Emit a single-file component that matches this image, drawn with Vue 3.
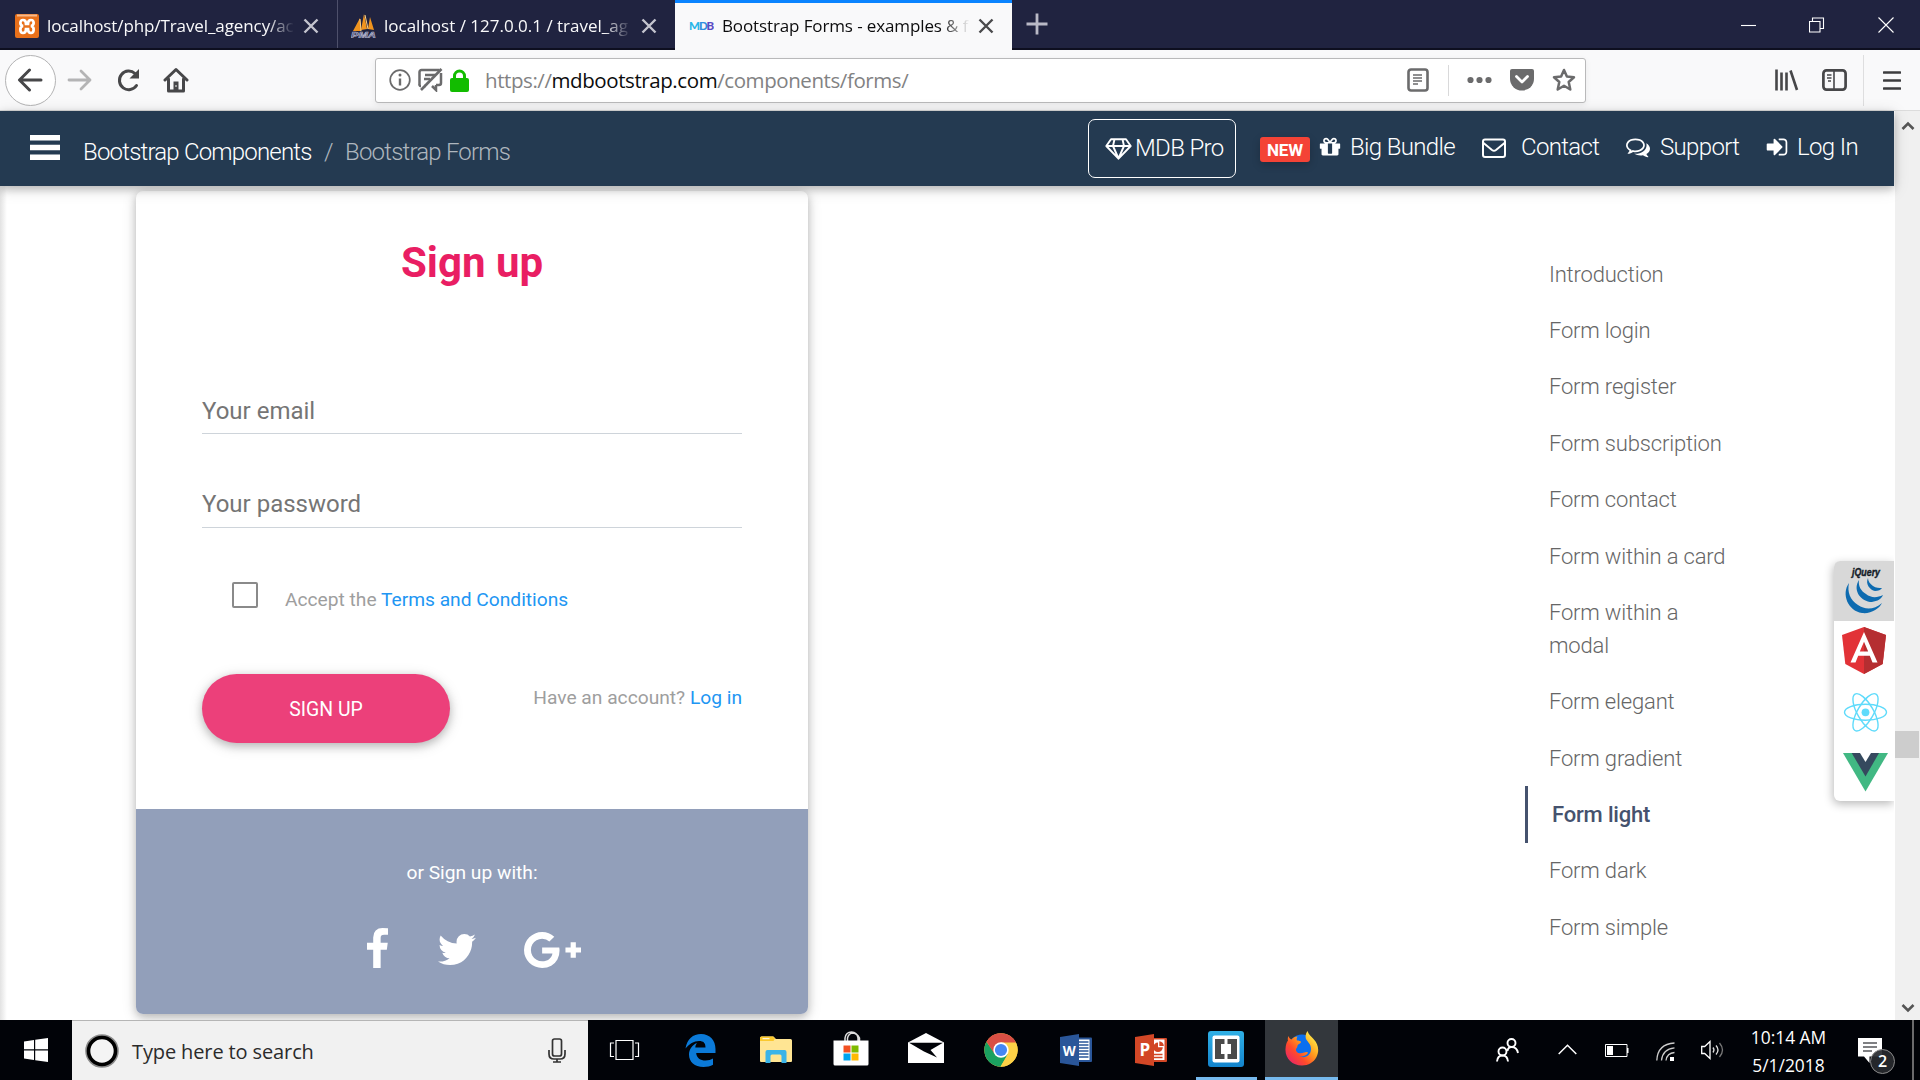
<script setup>
const sections = [
  'Introduction', 'Form login', 'Form register', 'Form subscription', 'Form contact',
  'Form within a card', 'Form within a modal', 'Form elegant', 'Form gradient',
  'Form light', 'Form dark', 'Form simple',
]
const active = 'Form light'
</script>

<template>
  <div class="screen">
    <header class="tabs">
      <div class="tab">
        <svg class="fav" width="24" height="24" viewBox="0 0 24 24">
          <rect width="24" height="24" rx="2" fill="#e8701a" />
          <path d="M2 1.5h20" stroke="#f7b98a" stroke-width="2" />
          <path d="M8 6c-3 0-4 5 0 6-4 1-3 7 0 7 3 0 3-3 3-4h2c0 1 0 4 3 4s4-6 0-7c4-1 3-6 0-6s-3 3-3 4h-2c0-1 0-4-3-4z" fill="none" stroke="#fff" stroke-width="2.7" />
        </svg>
        <span class="label t1">localhost/php/Travel_agency/ac</span>
        <svg class="x" width="16" height="16" viewBox="0 0 16 16"><path d="M1.5 1.5l13 13M14.500 1.500l-13 13" /></svg>
      </div>
      <div class="tab second">
        <svg class="fav" width="26" height="24" viewBox="0 0 26 24">
          <path d="M2 17L9 4l1 13zM10 16L13 0l3 15zM17 15l2-12 4 13z" fill="#f0941e" />
          <path d="M10 17L9 5M17 15L14 1" stroke="#ffd58c" />
          <text x="0" y="23.500" textLength="25" lengthAdjust="spacingAndGlyphs" font-family="Liberation Sans" font-size="9.500" font-weight="700" font-style="italic" fill="#3b3f6b" stroke="#b9bad0" stroke-width=".6">PMA</text>
        </svg>
        <span class="label t2">localhost / 127.0.0.1 / travel_ag</span>
        <svg class="x" width="16" height="16" viewBox="0 0 16 16"><path d="M1.500 1.500l13 13M14.500 1.500l-13 13" /></svg>
      </div>
      <div class="tab current">
        <svg class="fav" width="25" height="24" viewBox="0 0 25 24" font-family="Lato" font-weight="900" font-size="11.500">
          <text x="0" y="16" fill="#28b6e8">M</text><text x="10" y="16" fill="#2f8fe0">D</text><text x="17.500" y="16" fill="#5b4bc4">B</text>
        </svg>
        <span class="label t3">Bootstrap Forms - examples &amp; f</span>
        <svg class="x" width="16" height="16" viewBox="0 0 16 16"><path d="M1.500 1.500l13 13M14.500 1.500l-13 13" /></svg>
      </div>
      <svg class="plus" width="22" height="22" viewBox="0 0 22 22"><path d="M11 0.500v21M.5 11h21" stroke="#b9b9c6" stroke-width="2.800" /></svg>
      <div class="winbtns">
        <svg width="16" height="16" viewBox="0 0 16 16"><path d="M1 8.500h15" /></svg>
        <svg width="16" height="16" viewBox="0 0 16 16"><path d="M.5 4.500h10.500v10.500H.5zM3.500 4.500V1h11v10.500h-3.500" /></svg>
        <svg width="16" height="16" viewBox="0 0 16 16"><path d="M.5.5l15 15M15.500.5l-15 15" /></svg>
      </div>
    </header>

    <div class="toolbar">
      <div class="back">
        <svg width="26" height="24" viewBox="0 0 26 24"><path d="M24 12H3M12.500 2L2.500 12l10 10" fill="none" stroke="#474749" stroke-width="3" stroke-linecap="round" stroke-linejoin="round" /></svg>
      </div>
      <svg class="fwd" width="26" height="24" viewBox="0 0 26 24"><path d="M2 12h21M14 3l9 9-9 9" fill="none" stroke="#b4b4b5" stroke-width="2.800" stroke-linecap="round" stroke-linejoin="round" /></svg>
      <svg class="reload" width="25" height="24" viewBox="0 0 25 24"><path d="M20.500 17.500A9.300 9.300 0 1 1 19 5.500" fill="none" stroke="#474749" stroke-width="3" stroke-linecap="round" /><path d="M23 1v9.500h-9.500z" fill="#474749" /></svg>
      <svg class="home" width="26" height="26" viewBox="0 0 26 26"><path d="M2 13L13 2.500 24 13M5.500 12v12h15V12" fill="none" stroke="#474749" stroke-width="3" stroke-linecap="round" stroke-linejoin="round" /><path d="M10.500 23v-8.500h5V23z" fill="#474749" /><path d="M13 18v2" stroke="#bbb" stroke-width="1.500" /></svg>
      <div class="urlbar">
        <svg class="u1" width="22" height="22" viewBox="0 0 22 22"><circle cx="11" cy="11" r="9.800" fill="none" stroke="#6b6b6c" stroke-width="1.700" /><path d="M11 9.500v7" stroke="#6b6b6c" stroke-width="2.400" /><circle cx="11" cy="6" r="1.500" fill="#6b6b6c" /></svg>
        <svg class="u2" width="25" height="24" viewBox="0 0 25 24"><path d="M3 18H2.500A1.500 1.500 0 0 1 1.500 16V4A2 2 0 0 1 3.500 2h18M8 18h-2M18 17h3a2 2 0 0 0 2-2V5M7 7h10M6 11h6M18 17v5l-4-4" fill="none" stroke="#6b6b6c" stroke-width="2.500" /><path d="M23.500 1L3 22" stroke="#6b6b6c" stroke-width="2.600" /></svg>
        <svg class="u3" width="19" height="23" viewBox="0 0 19 23"><rect y="9" width="19" height="14" rx="2" fill="#12bc00" /><path d="M4.500 11V7a5 5 0 0 1 10 0v4" fill="none" stroke="#12bc00" stroke-width="3" /></svg>
        <span class="url">https://<b>mdbootstrap.com</b>/components/forms/</span>
        <svg class="u4" width="22" height="24" viewBox="0 0 22 24"><rect x="1.500" y="1.500" width="19" height="21" rx="2.500" fill="none" stroke="#6b6b6c" stroke-width="2.600" /><path d="M6 7h9M6 10h9M6 13h9M6 16h5" stroke="#6b6b6c" stroke-width="1.400" /></svg>
        <i class="usep"></i>
        <svg class="u5" width="25" height="8" viewBox="0 0 25 8"><g fill="#6b6b6c"><circle cx="3.500" cy="4" r="3.100" /><circle cx="12.500" cy="4" r="3.100" /><circle cx="21.500" cy="4" r="3.100" /></g></svg>
        <svg class="u6" width="24" height="22" viewBox="0 0 24 22"><path d="M2 0h20a2 2 0 0 1 2 2v8a12 11.500 0 0 1-24 0V2a2 2 0 0 1 2-2z" fill="#6b6b6c" /><path d="M6.500 7.500L12 13l5.500-5.500" fill="none" stroke="#fff" stroke-width="2.800" stroke-linecap="round" stroke-linejoin="round" /></svg>
        <svg class="u7" width="24" height="24" viewBox="0 0 24 24"><path d="M12 2l2.900 6.500 7.100.7-5.300 4.800 1.600 7.500L12 17.700 5.700 21.500l1.600-7.500L2 9.200l7.100-.7z" fill="none" stroke="#6b6b6c" stroke-width="2.500" stroke-linejoin="round" /></svg>
      </div>
      <svg class="lib" width="24" height="22" viewBox="0 0 24 22"><path d="M1.500 0.500v21M6.500 3.500v18M11.500 3.500v18M15.500 1.500l6.500 19.500" stroke="#474749" stroke-width="2.600" /></svg>
      <svg class="side" width="25" height="22" viewBox="0 0 25 22"><rect x="1.400" y="1.400" width="22.200" height="19.200" rx="3" fill="none" stroke="#474749" stroke-width="2.700" /><path d="M12 2v18" stroke="#474749" stroke-width="1.600" /><path d="M5 6h4.500M5 9h4.500M6 12h3" stroke="#474749" stroke-width="1.500" /></svg>
      <i class="tsep"></i>
      <svg class="menu" width="18" height="19" viewBox="0 0 18 19"><path d="M1 1.500h16M1 9.500h16M1 17.500h16" stroke="#3c3c3e" stroke-width="2.600" stroke-linecap="round" /></svg>
    </div>

    <div class="viewport">
      <div class="page">
        <nav class="nav">
          <svg class="burger" width="30" height="25" viewBox="0 0 30 25"><path d="M0 0h30v5.500H0zM0 9.700h30v5.500H0zM0 19.500h30v5.500H0z" fill="#fff" /></svg>
          <span class="crumb c1">Bootstrap Components</span>
          <span class="crumb c2">/</span>
          <span class="crumb c3">Bootstrap Forms</span>
          <a class="pro">
            <svg width="27" height="22" viewBox="0 0 27 22"><path d="M6 1.200h15L25.700 8 13.500 20.700 1.300 8zM1.300 8h24.400M9.500 1.200L8 8l5.500 12.500L19 8l-1.500-6.800" fill="none" stroke="#fff" stroke-width="1.900" stroke-linejoin="round" /></svg>
            <span>MDB Pro</span>
          </a>
          <span class="new">NEW</span>
          <a class="link l1">
            <svg width="22" height="22" viewBox="64 128 1664 1536"><path fill="#fff" d="M1056 1356v-716h-320v716q0 25 18 38.500t46 13.500h192q28 0 46-13.500t18-38.500zm-456-844h195l-126-161q-26-31-69-31-40 0-68 28t-28 68 28 68 68 28zm688-96q0-40-28-68t-68-28q-43 0-69 31l-125 161h194q40 0 68-28t28-68zm376 256v320q0 14-9 23t-23 9h-96v416q0 40-28 68t-68 28h-1088q-40 0-68-28t-28-68v-416h-96q-14 0-23-9t-9-23v-320q0-14 9-23t23-9h440q-93 0-158.500-65.500t-65.500-158.500 65.500-158.500 158.500-65.500q107 0 168 77l128 165 128-165q61-77 168-77 93 0 158.500 65.500t65.500 158.500-65.500 158.500-158.500 65.500h440q14 0 23 9t9 23z" /></svg>
            <span>Big Bundle</span>
          </a>
          <a class="link l2">
            <svg width="24" height="21" viewBox="0 0 24 21"><rect x="1" y="1.500" width="22" height="17.500" rx="2" fill="none" stroke="#fff" stroke-width="2" /><path d="M1.500 5l8.500 7q2 1.500 4 0l8.500-7" fill="none" stroke="#fff" stroke-width="2" /></svg>
            <span>Contact</span>
          </a>
          <a class="link l3">
            <svg width="24" height="24" viewBox="0 0 1792 1792"><path fill="#fff" d="M704 384q-153 0-286 52t-211.500 141-78.500 191q0 82 53 158t149 132l97 56-35 84q34-20 62-39l44-31 53 10q78 14 153 14 153 0 286-52t211.500-141 78.500-191-78.500-191-211.500-141-286-52zm0-128q191 0 353.500 68.500t256.500 186.500 94 257-94 257-256.500 186.500-353.500 68.500q-86 0-176-16-124 88-278 128-36 9-86 16h-3q-11 0-20.500-8t-11.500-21q-1-3-1-6.500t.5-6.500 2-6l2.500-5 3.500-5.500 4-5 4.500-5 4-4.500q5-6 23-25t26-29.500 22.500-29 25-38.500 20.500-44q-124-72-195-177t-71-224q0-139 94-257t256.500-186.500 353.500-68.500zm822 1169q10 24 20.500 44t25 38.500 22.500 29 26 29.500 23 25q1 1 4 4.500t4.500 5 4 5 3.500 5.500l2.500 5 2 6 .5 6.500-1 6.500q-3 14-13 22t-22 7q-50-7-86-16-154-40-278-128-90 16-176 16-271 0-472-132 58 4 88 4 161 0 309-45t264-129q125-92 192-212t67-254q0-77-23-152 129 71 204 178t75 230q0 120-71 224.500t-195 176.500z" /></svg>
            <span>Support</span>
          </a>
          <a class="link l4">
            <svg width="24" height="24" viewBox="0 0 1792 1792"><path fill="#fff" d="M1312 896q0 26-19 45l-544 544q-19 19-45 19t-45-19-19-45v-288h-448q-26 0-45-19t-19-45v-384q0-26 19-45t45-19h448v-288q0-26 19-45t45-19 45 19l544 544q19 19 19 45zm352-352v704q0 119-84.500 203.500t-203.500 84.500h-320q-13 0-22.500-9.500t-9.500-22.500q0-4-1-20t-.5-26.500 3-23.500 10-19.500 20.500-6.500h320q66 0 113-47t47-113v-704q0-66-47-113t-113-47h-312l-11.500-1-11.500-3-8-5.500-7-9-2-13.500q0-4-1-20t-.5-26.500 3-23.500 10-19.500 20.500-6.500h320q119 0 203.500 84.500t84.500 203.500z" /></svg>
            <span>Log In</span>
          </a>
        </nav>

        <main class="content">
          <section class="card">
            <div class="card-body">
              <h3>Sign up</h3>
              <div class="field first">Your email</div>
              <div class="field">Your password</div>
              <div class="accept">
                <i class="box"></i>
                <span>Accept the <a>Terms and Conditions</a></span>
              </div>
              <div class="actions">
                <button>SIGN UP</button>
                <span>Have an account? <a>Log in</a></span>
              </div>
            </div>
            <div class="card-footer">
              <p>or Sign up with:</p>
              <div class="social">
                <svg class="fb" width="21" height="40" viewBox="479 0 864 1664" preserveAspectRatio="none"><path fill="#fff" d="M1343 12v264h-157q-86 0-116 36t-30 108v189h293l-39 296h-254v759h-306v-759h-255v-296h255v-218q0-186 104-288.500t277-102.500q147 0 228 12z" /></svg>
                <svg class="tw" width="38" height="31" viewBox="108 256 1576 1280" preserveAspectRatio="none"><path fill="#fff" d="M1684 408q-67 98-162 167 1 14 1 42 0 130-38 259.500t-115.500 248.500-184.500 210.500-258 146-323 54.500q-271 0-496-145 35 4 78 4 225 0 401-138-105-2-188-64.500t-114-159.500q33 5 61 5 43 0 85-11-112-23-185.500-111.500t-73.500-205.500v-4q68 38 146 41-66-44-105-115t-39-154q0-88 44-163 121 149 294.500 238.500t371.500 99.500q-8-38-8-74 0-134 94.500-228.500t228.500-94.500q140 0 236 102 109-21 205-78-37 115-142 178 93-10 186-50z" /></svg>
                <svg class="gp" width="57" height="36" viewBox="0 163 2304 1466" preserveAspectRatio="none"><path fill="#fff" d="M1437 913q0 208-87 370.500t-248 254-369 91.500q-149 0-285-58t-234-156-156-234-58-285 58-285 156-234 234-156 285-58q286 0 491 192l-199 191q-117-113-292-113-123 0-227.500 62t-165.500 168.500-61 232.500 61 232.500 165.500 168.500 227.500 62q83 0 152.500-23t114.500-57.500 78.500-78.500 49-83 21.500-74h-416v-252h692q12 63 12 122zm867-122v210h-209v209h-210v-209h-209v-210h209v-209h210v209h209z" /></svg>
              </div>
            </div>
          </section>

          <ul class="toc">
            <li v-for="s in sections" :key="s" :class="{ on: s === active }">{{ s }}</li>
          </ul>
        </main>

        <aside class="tech">
          <div class="on">
            <svg width="60" height="60" viewBox="0 0 60 60">
              <text x="18" y="15" textLength="28" lengthAdjust="spacingAndGlyphs" font-family="Liberation Sans" font-style="italic" font-weight="700" font-size="10" fill="#131b28" stroke="#131b28" stroke-width=".4">jQuery</text>
              <g fill="#0d6bb0">
                <path d="M15 22C7 33 14 50 28 52c9 1 17-4 20-10-8 7-17 7-24 2-8-5-11-13-9-22z" />
                <path d="M25 19c-6 9 0 20 11 22 5 0 11-2 13-7-6 3-12 3-17-1-5-3-8-8-7-14z" />
                <path d="M34 17c-3 6 2 12 7 13 3 0 6-1 7-3-3 0-6 0-9-2-3-2-5-5-5-8z" />
              </g>
            </svg>
          </div>
          <div>
            <svg width="60" height="60" viewBox="0 0 60 60">
              <path d="M30 6L8 14l3.300 29L30 53l18.700-10L52 14z" fill="#e23237" /><path d="M30 6v47l18.700-10L52 14z" fill="#b52e31" />
              <path d="M30 11L16.500 41.500h5l2.700-6.800h11.600l2.700 6.800h5zm0 9.800l4.200 9.700h-8.400z" fill="#fff" />
            </svg>
          </div>
          <div>
            <svg width="60" height="60" viewBox="0 0 60 60" fill="none" stroke="#5fdbfb" stroke-width="1.400">
              <ellipse cx="31.500" cy="31.300" rx="21" ry="8" /><ellipse cx="31.500" cy="31.300" rx="21" ry="8" transform="rotate(60 31.500 31.300)" /><ellipse cx="31.500" cy="31.300" rx="21" ry="8" transform="rotate(120 31.500 31.300)" />
              <circle cx="31.500" cy="31.300" r="3.900" fill="#5fdbfb" stroke="none" />
            </svg>
          </div>
          <div>
            <svg width="60" height="60" viewBox="0 0 60 60"><path d="M9 12h45L31.500 50.500z" fill="#41b883" /><path d="M17.700 12H45L31.500 35.500z" fill="#35495e" /><path d="M26 12h11l-5.500 9z" fill="#fff" /></svg>
          </div>
        </aside>
      </div>

      <div class="scroll">
        <svg width="14" height="10" viewBox="0 0 14 10"><path d="M1.500 8L7 2.500 12.500 8" fill="none" stroke="#555" stroke-width="2.600" /></svg>
        <i class="thumb"></i>
        <svg width="14" height="10" viewBox="0 0 14 10"><path d="M1.500 2L7 7.500 12.500 2" fill="none" stroke="#555" stroke-width="2.600" /></svg>
      </div>
    </div>

    <footer class="taskbar">
      <div class="start"><svg width="24" height="24" viewBox="0 0 24 24"><path d="M0 3.400L10 2v9.300H0zM11.200 1.800L24 0v11.300H11.200zM0 12.500h10V22L0 20.600zM11.200 12.500H24V24l-12.800-1.800z" fill="#fff" /></svg></div>
      <div class="search">
        <svg class="cortana" width="34" height="34" viewBox="0 0 34 34"><circle cx="17" cy="17" r="14.800" fill="none" stroke="#8a8a8a" stroke-width="4" /><circle cx="17" cy="17" r="13.500" fill="#f4f4f4" stroke="#000" stroke-width="3.600" /></svg>
        <span>Type here to search</span>
        <svg class="mic" width="18" height="25" viewBox="0 0 18 25"><rect x="4.500" y="1" width="9" height="17" rx="2" fill="none" stroke="#333" stroke-width="1.700" /><path d="M1 12v4q0 5 5 5h6q5 0 5-5v-4M9 21v3M5 24h8" fill="none" stroke="#333" stroke-width="1.700" /></svg>
      </div>
      <div class="apps">
        <div><svg class="tv" width="32" height="22" viewBox="0 0 32 22"><path d="M7 1.500h17v19H7zM5 4H1.500v13.500H5M26 4h3.500v13.500H26" fill="none" stroke="#fff" stroke-width="1.200" /></svg></div>
        <div><svg width="31" height="33" viewBox="0 0 31 33"><path d="M.5 14.500C2 5 8 0 16 0c9 0 14.500 6.500 14.500 15v4H11.200c.3 5 4.300 7.500 9.300 7.500 3 0 5.500-.8 7.500-2v6.200C25.500 32 22 33 18.500 33 9.500 33 4 28 4 20.500c0-5 3-9.500 8-11.500-1 1.200-1.500 2.500-1.700 4.500h10.200c0-4.500-2-6.500-6.500-6.500-5 0-10 3-13.500 7.500z" fill="#0b7ad8" /></svg></div>
        <div><svg width="34" height="28" viewBox="0 0 34 28"><path d="M1 2q0-1.500 1.500-1.500h12L17 3h14.500Q33 3 33 4.500V25q0 1-1 1H2q-1 0-1-1z" fill="#ffe593" /><path d="M1 4V2Q1 .5 2.500.5h11.500l2 2-1.500 2.500H1z" fill="#fbc92e" /><path d="M3.500 2.700h7" stroke="#fff" /><path d="M6.500 27V16q0-2 2-2h17q2 0 2 2v11h-5v-7q0-1.500-1.500-1.500h-8q-1.500 0-1.500 1.500v7z" fill="#3bb4e8" /></svg></div>
        <div><svg class="up" width="36" height="35" viewBox="0 0 36 35"><path d="M12 10V7q1-6 6.500-6T25 7v3M14.500 10V7q1-4 4.500-5 5 0 7.500 5v3" fill="none" stroke="#ddd" stroke-width="1.500" /><path d="M.5 9.500h35V33q0 1.500-1.500 1.500H2Q.5 34.500.5 33z" fill="#fff" /><path fill="#f25022" d="M10.500 14.500h7v7h-7z" /><path fill="#7fba00" d="M18.500 14.500h7v7h-7z" /><path fill="#00a4ef" d="M10.500 22.500h7v7h-7z" /><path fill="#ffb900" d="M18.500 22.500h7v7h-7z" /></svg></div>
        <div><svg class="up" width="36" height="30" viewBox="0 0 36 30"><path d="M0 9.500L18 0l18 9.500V30H0z" fill="#fff" /><path d="M1 9.800h34L22.500 17l6.500 7.500L16 18.500z" fill="#010308" /></svg></div>
        <div><svg width="34" height="34" viewBox="0 0 34 34"><circle cx="17" cy="17" r="16.700" fill="#fdd147" /><path d="M2.500 8.700A16.700 16.700 0 0 0 16.500 33.700L24 21l-7-4-6.500 3z" fill="#1aa15f" /><path d="M17 9.500h14.900A16.700 16.700 0 0 1 16.500 33.700l7-12z" fill="#fdd147" /><path d="M2.500 8.700A16.700 16.700 0 0 1 31.900 9.500H17L10 20z" fill="#d94f44" /><circle cx="17" cy="17" r="7.700" fill="#fff" /><circle cx="17" cy="17" r="6.100" fill="#4587f3" /></svg></div>
        <div><svg width="32" height="32" viewBox="0 0 32 32"><path d="M17 3.500h14q1 0 1 1V27q0 1-1 1H17z" fill="#2a5699" /><path d="M18 5.500h11.500V26H18z" fill="#fff" /><path d="M19 8h9.500M19 11h9.500M19 14h9.500M19 17h9.500M19 20h9.500M19 23h9.500" stroke="#2a5699" stroke-width="1.300" /><path d="M0 3l19-3v32L0 29z" fill="#2a5699" /><text x="2.700" y="22" textLength="13" lengthAdjust="spacingAndGlyphs" font-family="Open Sans" font-size="15" font-weight="700" fill="#fff">W</text></svg></div>
        <div><svg width="32" height="32" viewBox="0 0 32 32"><path d="M17 4h14q1 0 1 1v22q0 1-1 1H17z" fill="#d24726" /><path d="M18 5.500h11.500V26H18z" fill="#fff" /><path d="M23 8.500a4.800 4.800 0 1 0 4.800 4.800H23z" fill="#d24726" /><path d="M24.300 7.200v4.800h4.500a4.600 4.600 0 0 0-4.500-4.800z" fill="#d24726" /><path d="M19 20.500h8.500M19 23.500h8.500" stroke="#d24726" stroke-width="1.400" /><path d="M0 3l19-3v32L0 29z" fill="#d24726" /><text x="4.500" y="22" font-family="Open Sans" font-size="17" font-weight="700" fill="#fff">P</text></svg></div>
        <div class="open"><svg width="36" height="36" viewBox="0 0 36 36"><defs><linearGradient id="br" x2="0" y2="1"><stop stop-color="#2fb0e6" /><stop offset="1" stop-color="#1384cd" /></linearGradient></defs><rect width="36" height="36" rx="3" fill="url(#br)" /><rect x="4.500" y="4.500" width="27" height="27" rx="2" fill="#fff" /><path d="M7 8h9.500v5H13v10h3.500v5H7zM29 8h-9.500v5H23v10h-3.500v5H29z" fill="#4a4a4a" /></svg></div>
        <div class="front"><svg width="34" height="35" viewBox="0 0 34 35"><defs><linearGradient id="fx" x1="1" y1="0" x2="0" y2="1"><stop offset=".1" stop-color="#fff44f" /><stop offset=".4" stop-color="#ffa01e" /><stop offset=".65" stop-color="#ff4a2b" /><stop offset="1" stop-color="#e0177f" /></linearGradient></defs>
          <circle cx="17" cy="17" r="13.500" fill="#0a6ff0" />
          <path d="M3.500 5C4 7 5 8 6.500 8.500 8 6.500 10 5.500 12.500 5.500 11.500 7 11.500 8.500 12 9.500c1.500 0 4 .5 4 1.500 0 1.500-3 2-3.500 3.500 0 2.500-2 3-1.500 5 1 3 5 3.500 8 2 2-1 4-.5 4 .5-2 3-6 4-9 3 5 3 12 0 12-7 0-5-3-6.500-5-10C20 5 21 2 22.500 0c1 3.500 4 5.500 6 8 5 5 6 12 3 18-3 5.500-8 8.500-14.500 8.500C7 34.500 0 27 .5 18 .7 14 1.500 11.500 3 9.500 2.500 8 2.800 6.500 3.500 5z" fill="url(#fx)" /></svg></div>
      </div>
      <div class="tray">
        <svg class="people" width="23" height="24" viewBox="0 0 23 24"><g fill="none" stroke="#fff" stroke-width="1.900"><circle cx="15.500" cy="5" r="4" /><path d="M11.500 13q.5-4 4-4 5.500 0 6.500 6" /><circle cx="6.500" cy="13.500" r="4" /><path d="M1 23.500q.5-6 5.500-6t5.500 6" /></g></svg>
        <svg class="chev" width="19" height="11" viewBox="0 0 19 11"><path d="M.7 10L9.500 1.200 18.300 10" fill="none" stroke="#fff" stroke-width="1.500" /></svg>
        <svg class="batt" width="24" height="13" viewBox="0 0 24 13"><path d="M.5.5h21.500v12H.5z" fill="none" stroke="#fff" /><path d="M2 2h6v9H2zM22 4h1.500v5H22z" fill="#fff" /></svg>
        <svg class="wifi" width="19" height="19" viewBox="0 0 19 19"><g fill="none" stroke="#ccc" stroke-width="1.300"><path d="M.8 18.500Q1.500 2 18.500 1M5.500 18.500Q6.500 7 18.500 5.800M10 18.500q1-7.500 8.500-8" /></g><path d="M14 15h4v4h-4z" fill="#fff" /></svg>
        <svg class="vol" width="23" height="20" viewBox="0 0 23 20"><path d="M.7 6.500h3L9 1.500v17l-5.300-5H.7z" fill="none" stroke="#fff" stroke-width="1.300" /><path d="M12 7.500q2 2.500 0 5M15 5.500q4 4.500 0 9" fill="none" stroke="#ddd" stroke-width="1.300" /><path d="M18.500 3q6 7 0 14" fill="none" stroke="#777" stroke-width="1.300" /></svg>
        <div class="clock"><span>10:14 AM</span><span>5/1/2018</span></div>
        <div class="notif">
          <svg width="24" height="25" viewBox="0 0 24 25"><path d="M0 0h24v18.500H11.500V25L6 18.500H0z" fill="#fff" /><path d="M5 5h14M5 9h14M5 13h9" stroke="#010308" stroke-width="1.200" /></svg>
          <b>2</b>
        </div>
        <i class="desk"></i>
      </div>
    </footer>
  </div>
</template>

<style>
body { margin: 0; overflow: hidden; }
</style>

<style scoped>
.screen { width: 1920px; height: 1080px; display: flex; flex-direction: column; overflow: hidden; background: #fff; font-family: Roboto, sans-serif; }
.screen *, .screen { box-sizing: border-box; }
svg { display: block; flex: none; }

.tabs { height: 50px; flex: none; display: flex; background: #202340; border-bottom: 2px solid #0e0f20; font-family: "Open Sans", sans-serif; }
.tab { width: 338px; height: 48px; display: flex; align-items: center; padding-left: 14px; border-right: 1px solid #4e506b; color: #f9f9fa; padding-top: 4px; }
.tab.second { width: 337px; border-right: 0; padding-left: 13px; }
.tab.second .x { margin-left: 7px; }
.tab .fav { width: 26px; }
.label { width: 250px; margin-left: 7px; font-size: 17px; line-height: 26px; white-space: nowrap; overflow: hidden; -webkit-mask-image: linear-gradient(90deg, #000 88%, transparent 99%); mask-image: linear-gradient(90deg, #000 88%, transparent 99%); }
.t1 { letter-spacing: -.1px; }
.t3 { letter-spacing: -.12px; }
.tab .x { margin-left: 6px; stroke: #c3c4ce; stroke-width: 2.4; fill: none; }
.tab.current { height: 50px; background: #f9f9fa; color: #0c0c0d; border-right: 0; border-top: 3px solid #0a84ff; padding-top: 1px; padding-bottom: 2px; width: 337px; }
.tab.current .fav { width: 25px; }
.tab.current .x { stroke: #4a4a4c; }
.tab.current .label { margin-left: 8px; }
.plus { margin: 13px 0 0 14px; }
.winbtns { margin-left: auto; display: flex; gap: 53px; padding: 17px 26px 0 0; }
.winbtns svg { fill: none; stroke: #fff; stroke-width: 1.1; }

.toolbar { height: 61px; flex: none; display: flex; align-items: center; background: #f9f9fa; border-bottom: 1px solid #dcdcdc; padding-left: 5px; }
.back { width: 51px; height: 51px; border: 1px solid #b3b3b4; border-radius: 50%; background: #fff; display: grid; place-items: center; padding-right: 1px; }
.fwd { margin-left: 11px; }
.reload { margin-left: 23px; }
.home { margin-left: 22px; }
.urlbar { margin-left: 186px; width: 1211px; height: 45px; border: 1px solid #b9b9ba; border-radius: 3px; background: #fff; box-shadow: 0 2px 6px rgba(0,0,0,.07); display: flex; align-items: center; padding-left: 13px; }
.u2 { margin-left: 7px; }
.u3 { margin-left: 7px; }
.url { margin-left: 16px; width: 922px; font-family: "Open Sans", sans-serif; font-size: 20.5px; letter-spacing: -.42px; line-height: 30px; color: #828283; white-space: nowrap; }
.url b { font-weight: 400; color: #0c0c0d; }
.usep { width: 1px; height: 31px; background: #d9d9da; margin: 0 18px 0 19px; }
.u6 { margin-left: 18px; }
.u7 { margin-left: 18px; }
.lib { margin-left: 189px; }
.side { margin-left: 23px; }
.tsep { width: 1px; height: 51px; background: #dededf; margin: 0 19px 0 16px; }

.viewport { height: 909px; flex: none; display: flex; }
.page { width: 1895px; position: relative; display: flex; flex-direction: column; background: #fff; }
.nav { position: relative; z-index: 2; width: 1894px; height: 75px; flex: none; background: #243a51; display: flex; align-items: flex-start; color: #fff; font-weight: 300; font-size: 24px; line-height: 36px; white-space: nowrap; letter-spacing: -.65px; box-shadow: 0 3px 8px rgba(0,0,0,.2), 0 3px 15px rgba(0,0,0,.15); padding-left: 30px; }
.burger { margin-top: 24px; }
.crumb { margin-top: 23px; letter-spacing: -.8px; }
.c1 { margin-left: 23px; width: 241px; }
.c2 { width: 21px; color: #aeb6be; }
.c3 { width: 744px; color: #aeb6be; }
.pro { width: 148px; height: 59px; margin-left: -1px; margin-top: 8px; border: 1px solid #fff; border-radius: 7px; display: flex; padding: 10px 0 0 16px; }
.pro svg { margin-top: 8px; }
.pro span { margin-left: 3px; }
.new { margin: 26px 0 0 24px; width: 50px; height: 25px; background: #f44336; border-radius: 3px; box-shadow: 0 3px 8px rgba(0,0,0,.2); font-weight: 700; font-size: 17px; line-height: 26px; text-align: center; letter-spacing: -.1px; }
.link { display: flex; margin-top: 18px; }
.l1 { width: 162px; margin-left: 9px; }
.l1 svg { margin: 7px 9px 0 0; }
.l2 { width: 144px; margin-left: 1px; }
.l2 svg { margin: 9px 15px 0 0; }
.l3 { width: 139px; }
.l3 svg { margin: 6px 10px 0 0; }
.l4 svg { margin: 6px 8px 0 0; }

.content { flex: 1; display: flex; align-items: flex-start; overflow: hidden; background: linear-gradient(90deg, #e2e2e2, #fff 7px); }
.card { width: 672px; height: 823px; margin: 5px 0 0 136px; border-radius: 7px; overflow: hidden; box-shadow: 0 3px 8px rgba(0,0,0,.2), 0 3px 15px rgba(0,0,0,.14); background: #fff; font-size: 19.2px; line-height: 28px; }
.card-body { height: 618px; padding: 48px 66px 0; color: #9e9e9e; }
.card a { color: #2196f3; }
h3 { margin: 0 0 105px; text-align: center; font-size: 42px; line-height: 48px; font-weight: 700; color: #e91e63; }
.field { height: 42px; margin-bottom: 52px; border-bottom: 1px solid #ced4da; font-size: 24px; line-height: 36px; color: #757575; }
.field.first { line-height: 38px; }
.accept { display: flex; height: 26px; margin: 55px 0 65px 30px; }
.box { width: 26px; height: 26px; border: 2px solid #8a8a8a; border-radius: 2px; margin-top: -1px; }
.accept span { margin: 3px 0 0 27px; white-space: nowrap; }
.actions { display: flex; justify-content: space-between; }
.actions span { margin-top: 10px; }
button { width: 248px; height: 69px; border: 0; border-radius: 35px; background: #ec407a; color: #fff; font: 400 19.4px Roboto, sans-serif; box-shadow: 0 3px 8px rgba(0,0,0,.2), 0 3px 15px rgba(0,0,0,.14); padding: 1px 0 0 0; }
.card-footer { height: 205px; background: #929fba; color: #fff; padding-top: 50px; }
.card-footer p { margin: 0; text-align: center; }
.social { display: flex; margin-top: 41px; padding-left: 231px; }
.tw { margin: 6px 0 0 50px; }
.gp { margin: 4px 0 0 48px; }

.toc { list-style: none; margin: 60px 0 0 717px; padding: 0; width: 230px; font-size: 22px; line-height: 33px; font-weight: 300; color: #666; letter-spacing: -.18px; }
.toc li { padding: 11.700px 25px 11.700px 24px; border-left: 0 solid; }
.toc li:nth-child(7) { padding-right: 40px; }
.toc li.on { border-left: 3px solid #45526e; color: #45526e; font-weight: 500; }
.tech { position: absolute; z-index: 3; right: 1px; top: 450px; width: 60px; height: 240px; background: #fff; border-radius: 6px 0 0 6px; box-shadow: -1px 3px 10px rgba(0,0,0,.28); clip-path: inset(-20px 0 -20px -20px); }
.tech .on { background: #d8d8d8; border-radius: 6px 0 0 0; }
.scroll { width: 25px; background: #f0f0f0; display: flex; flex-direction: column; align-items: center; padding: 10px 0 7px; }
.thumb { width: 24px; height: 27px; background: #cdcdcd; margin: 600px 1px auto 0; }

.taskbar { height: 60px; flex: none; display: flex; background: #010308; font-family: "Open Sans", sans-serif; }
.start { width: 72px; padding: 18px 0 0 24px; }
.search { width: 516px; background: #f1f1f1; border-top: 1px solid #b5b5b5; display: flex; align-items: center; padding-left: 13px; color: #2b2b2b; font-size: 20px; letter-spacing: -.12px; }
.search span { width: 416px; margin-left: 13px; padding-top: 1px; }
.mic { margin-top: -1px; }
.apps { display: flex; }
.apps div { width: 75px; height: 60px; display: grid; place-items: center; position: relative; }
.apps .up { margin-bottom: 4px; }
.apps .tv { margin-right: 2px; }
.apps .open { border-bottom: 3px solid #76b9ed; width: 61px; margin: 0 8px; padding-right: 2px; }
.apps .front { background: #33373c; border-bottom: 3px solid #76b9ed; width: 73px; }
.tray { margin-left: auto; display: flex; color: #fff; }
.people { margin-top: 18px; }
.chev { margin: 24px 0 0 39px; }
.batt { margin: 24px 0 0 28px; }
.wifi { margin: 22px 0 0 27px; }
.vol { margin: 20px 0 0 26px; }
.clock { width: 129px; display: flex; flex-direction: column; text-align: center; font-size: 17.400px; line-height: 28px; padding-top: 3px; }
.notif { position: relative; padding: 18px 0 0 5px; width: 59px; }
.notif b { position: absolute; left: 17px; top: 29px; width: 25px; height: 25px; border-radius: 50%; border: 1px solid #8b8b8b; background: rgba(40,42,46,.93); font-size: 16px; line-height: 23px; text-align: center; font-weight: 600; }
.desk { width: 8px; border-left: 2px solid #6a6a6c; }
</style>
